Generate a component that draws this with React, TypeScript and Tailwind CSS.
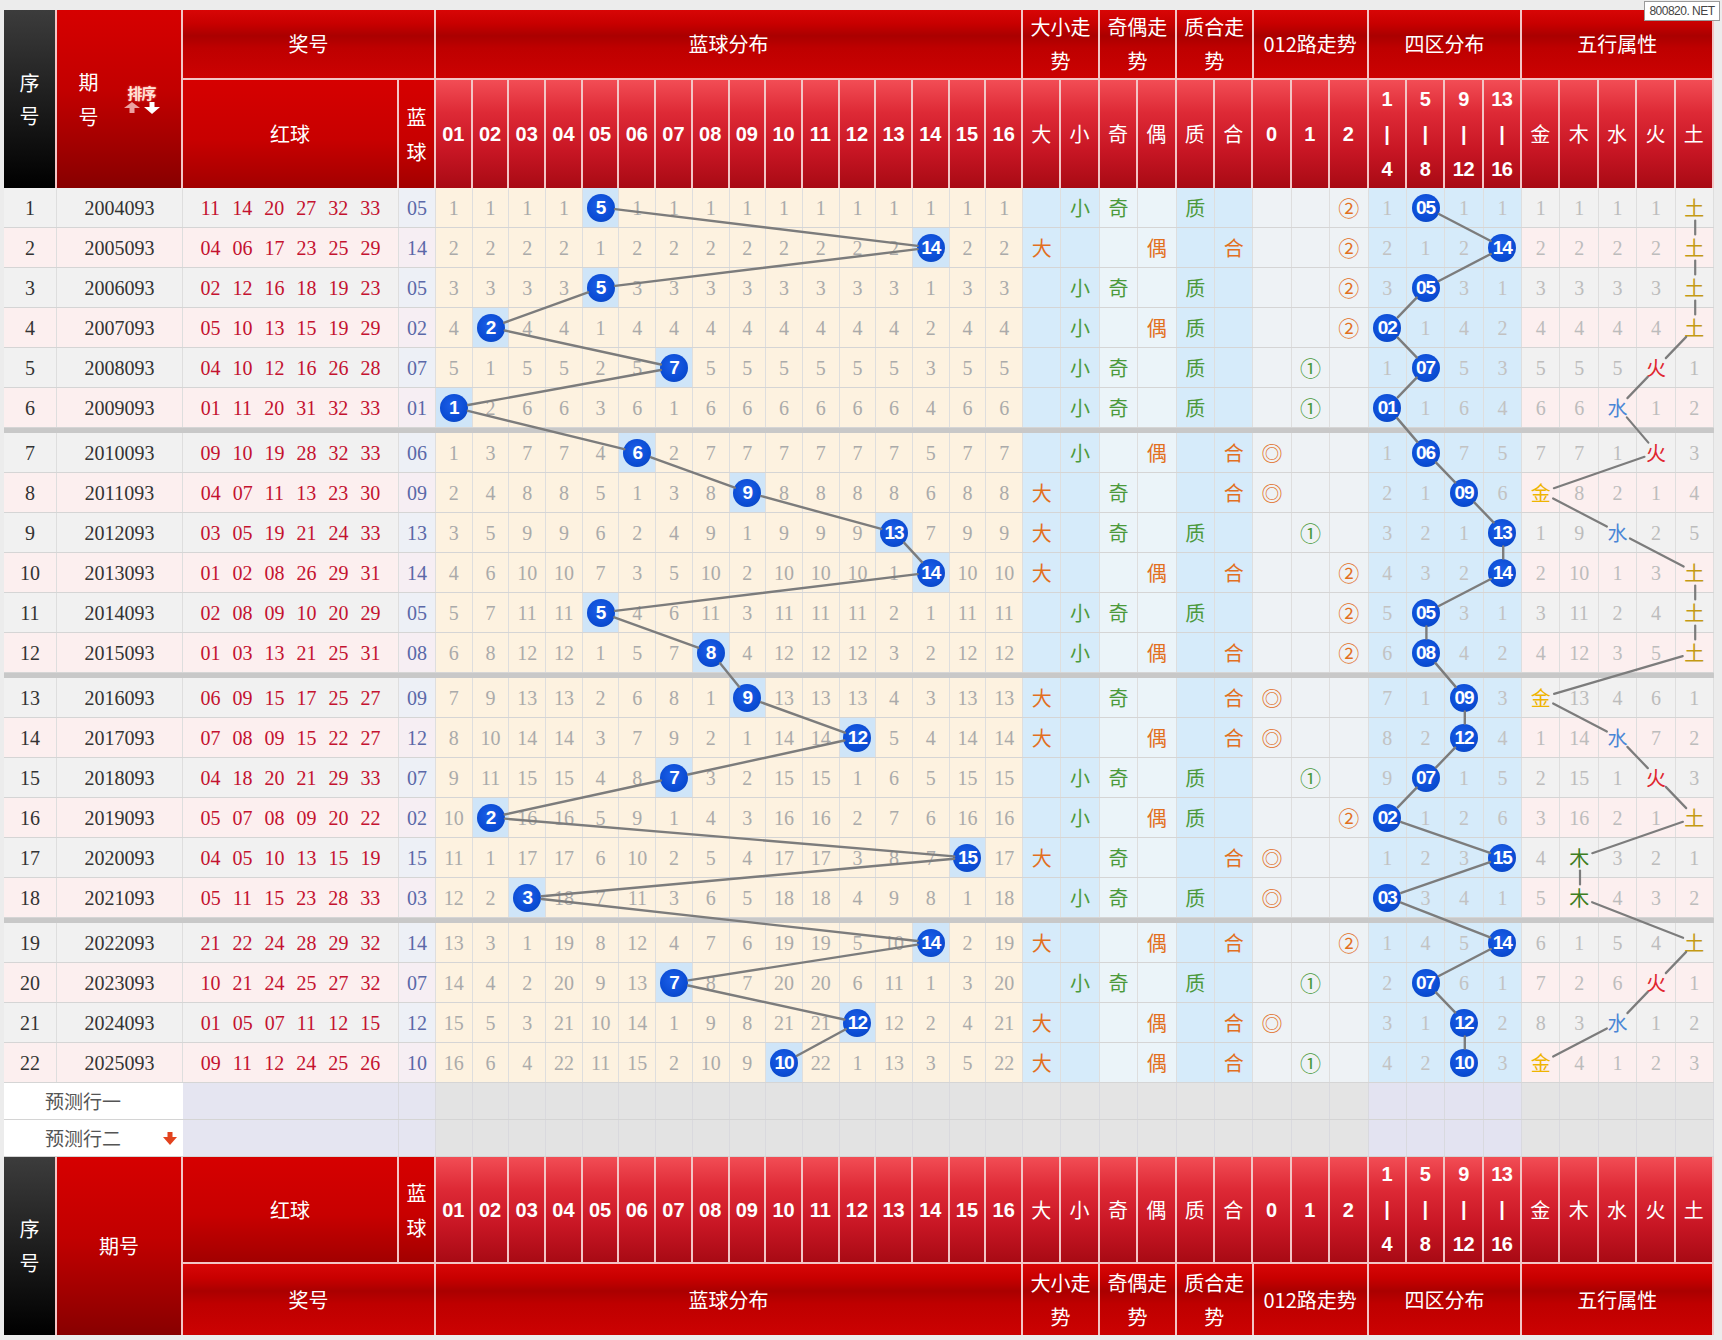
import React from 'react';

const CJK = "font-['Noto_Sans_CJK_SC','Noto_Sans',sans-serif]";
const SERIF = "font-['Liberation_Serif','Noto_Sans_CJK_SC',serif]";
const SANS = "font-['Liberation_Sans','Noto_Sans_CJK_SC',sans-serif]";

const G_TOP = "bg-[linear-gradient(to_bottom,#d80606_0%,#c80000_20%,#aa0000_38%,#be0000_56%,#cc0202_100%)]";
const G_NUM = "bg-[linear-gradient(to_bottom,#f24d55_0%,#de2a36_30%,#c81624_65%,#a80a14_100%)]";
const G_RED = "bg-[linear-gradient(to_bottom,#d60000_0%,#c80000_55%,#a20000_100%)]";
const G_ISSUE = "bg-[linear-gradient(to_bottom,#d60000_0%,#c20000_45%,#880000_100%)]";
const G_BLACK = "bg-[linear-gradient(to_bottom,#3c3c3c_0%,#1e1e1e_50%,#000000_100%)]";
const HB = 'border-r-2 border-[#f3c5c5]';

const BLUE = [5, 14, 5, 2, 7, 1, 6, 9, 13, 14, 5, 8, 9, 12, 7, 2, 15, 3, 14, 7, 12, 10];
const REDS = [
  '11 14 20 27 32 33',
  '04 06 17 23 25 29',
  '02 12 16 18 19 23',
  '05 10 13 15 19 29',
  '04 10 12 16 26 28',
  '01 11 20 31 32 33',
  '09 10 19 28 32 33',
  '04 07 11 13 23 30',
  '03 05 19 21 24 33',
  '01 02 08 26 29 31',
  '02 08 09 10 20 29',
  '01 03 13 21 25 31',
  '06 09 15 17 25 27',
  '07 08 09 15 22 27',
  '04 18 20 21 29 33',
  '05 07 08 09 20 22',
  '04 05 10 13 15 19',
  '05 11 15 23 28 33',
  '21 22 24 28 29 32',
  '10 21 24 25 27 32',
  '01 05 07 11 12 15',
  '09 11 12 24 25 26',
];
const WX = ['土', '土', '土', '土', '火', '水', '火', '金', '水', '土', '土', '土', '金', '水', '火', '土', '木', '木', '土', '火', '水', '金'];
const WX_ORDER = ['金', '木', '水', '火', '土'];
const WX_COLOR: Record<string, string> = {
  金: 'text-[#efb400]',
  木: 'text-[#3d7d22]',
  水: 'text-[#4a86d6]',
  火: 'text-[#e0252e]',
  土: 'text-[#c49a14]',
};
const PRIMES = [1, 2, 3, 5, 7, 11, 13];

function missing(hits: number[], n: number) {
  const cur = new Array(n).fill(0);
  return hits.map((h) => {
    for (let k = 0; k < n; k++) cur[k] = k === h ? 0 : cur[k] + 1;
    return [...cur];
  });
}

const DIST = missing(BLUE.map((b) => b - 1), 16);
const QUAD = missing(BLUE.map((b) => Math.floor((b - 1) / 4)), 4);
const WXM = missing(WX.map((w) => WX_ORDER.indexOf(w)), 5);

const rowTop = (i: number) => i * 40 + Math.floor(i / 6) * 5;

type P = { x: number; y: number };
function segs(pts: P[], r: number) {
  const out: { x1: number; y1: number; x2: number; y2: number }[] = [];
  for (let i = 0; i < pts.length - 1; i++) {
    const a = pts[i];
    const b = pts[i + 1];
    const dx = b.x - a.x;
    const dy = b.y - a.y;
    const L = Math.hypot(dx, dy);
    if (L <= 2 * r) continue;
    const ux = dx / L;
    const uy = dy / L;
    out.push({ x1: a.x + ux * r, y1: a.y + uy * r, x2: b.x - ux * r, y2: b.y - uy * r });
  }
  return out;
}

const distPts = BLUE.map((b, i) => ({ x: 432 + (b - 1) * 36.7 + 18.35, y: rowTop(i) + 19.5 }));
const quadPts = BLUE.map((b, i) => ({ x: 1364.8 + Math.floor((b - 1) / 4) * 38.4 + 19.2, y: rowTop(i) + 19.5 }));
const wxPts = WX.map((w, i) => ({ x: 1518.4 + WX_ORDER.indexOf(w) * 38.4 + 19.2, y: rowTop(i) + 19.5 }));

function Ball({ t }: { t: string }) {
  return (
    <div
      className={`w-[28px] h-[28px] rounded-full bg-[radial-gradient(circle_at_45%_40%,#1c5fe8_0%,#0b4cd4_60%,#0842b6_100%)] text-white font-bold text-[19px] leading-none flex items-center justify-center tracking-[-1px] ${SANS}`}
    >
      {t}
    </div>
  );
}

function GroupRow({ hClass, borderB }: { hClass: string; borderB: boolean }) {
  const b = borderB ? 'border-b-2' : '';
  const cell = `${G_TOP} ${HB} ${b} shrink-0 h-full flex items-center justify-center text-white text-[20px] text-center ${CJK}`;
  return (
    <div className={`flex ${hClass}`}>
      <div className={`${cell} w-[253px]`}>奖号</div>
      <div className={`${cell} w-[587.2px]`}>蓝球分布</div>
      <div className={`${cell} w-[76.8px] leading-[34px]`}>
        大小走
        <br />势
      </div>
      <div className={`${cell} w-[76.8px] leading-[34px]`}>
        奇偶走
        <br />势
      </div>
      <div className={`${cell} w-[76.8px] leading-[34px]`}>
        质合走
        <br />势
      </div>
      <div className={`${cell} w-[115.2px]`}>012路走势</div>
      <div className={`${cell} w-[153.6px]`}>四区分布</div>
      <div className={`${cell} w-[192px]`}>五行属性</div>
    </div>
  );
}

function SubRow({ hClass, borderB }: { hClass: string; borderB: boolean }) {
  const b = borderB ? 'border-b-2' : '';
  const base = `${HB} ${b} shrink-0 h-full flex items-center justify-center text-white text-center`;
  const num = `${base} ${G_NUM} w-[36.7px] text-[20px] font-bold ${SANS}`;
  const sm = `${base} ${G_NUM} w-[38.4px] text-[20px]`;
  return (
    <div className={`flex ${hClass}`}>
      <div className={`${base} ${G_RED} w-[216px] text-[20px] ${CJK}`}>红球</div>
      <div className={`${base} ${G_RED} w-[37px] text-[20px] leading-[35px] ${CJK}`}>
        蓝
        <br />球
      </div>
      {Array.from({ length: 16 }, (_, k) => (
        <div key={k} className={num}>
          {String(k + 1).padStart(2, '0')}
        </div>
      ))}
      {['大', '小', '奇', '偶', '质', '合'].map((t) => (
        <div key={t} className={`${sm} ${CJK}`}>
          {t}
        </div>
      ))}
      {['0', '1', '2'].map((t) => (
        <div key={t} className={`${sm} font-bold ${SANS}`}>
          {t}
        </div>
      ))}
      {[
        ['1', '4'],
        ['5', '8'],
        ['9', '12'],
        ['13', '16'],
      ].map(([a, c]) => (
        <div key={a} className={`${sm} font-bold leading-[35px] tracking-[-0.5px] ${SANS}`}>
          {a}
          <br />|
          <br />
          {c}
        </div>
      ))}
      {WX_ORDER.map((t) => (
        <div key={t} className={`${sm} ${CJK}`}>
          {t}
        </div>
      ))}
    </div>
  );
}

function SortIcon() {
  return (
    <div className="flex flex-col items-center">
      <div className={`text-[15px] font-bold leading-[18px] text-[#ffe2d6] tracking-[-1px] [text-shadow:0_0_2px_#ff8080] ${CJK}`}>
        排序
      </div>
      <svg width="36" height="12" viewBox="0 0 36 12">
        <polygon points="8,0 16,6 0,6" fill="#eba0a0" />
        <rect x="5.5" y="6" width="5" height="5" fill="#eba0a0" />
        <rect x="25.5" y="0" width="5" height="5" fill="#ffffff" />
        <polygon points="20,5 36,5 28,12" fill="#ffffff" />
      </svg>
    </div>
  );
}

function DataRow({ i }: { i: number }) {
  const b = BLUE[i];
  const even = i % 2 === 0;
  const leftBg = even ? 'bg-[#f1f1f1]' : 'bg-[#fcefef]';
  const blueBg = even ? 'bg-[#edf0f6]' : 'bg-[#f6eef3]';
  const cell = 'shrink-0 h-full border-r border-[#dedede] flex items-center justify-center';
  const miss = `text-[20px] text-[#aaaaaa] ${SERIF}`;
  const green = 'text-[#4c9a3c]';
  const orange = 'text-[#e2701f]';
  const big = b >= 9;
  const odd = b % 2 === 1;
  const prime = PRIMES.includes(b);
  const r = b % 3;
  const q = Math.floor((b - 1) / 4);
  const w = WX_ORDER.indexOf(WX[i]);
  const blueA = 'bg-[#d6ebfa]';
  const blueB = 'bg-[#ebf4f9]';
  const grayC = 'bg-[#eef2f5]';
  const ch = `text-[20px] ${CJK}`;
  return (
    <div className="flex h-[40px] border-b border-[#d5d5d5]">
      <div className={`${cell} ${leftBg} w-[53px] text-[20px] text-[#333] ${SERIF}`}>{i + 1}</div>
      <div className={`${cell} ${leftBg} w-[126px] text-[20px] text-[#333] ${SERIF}`}>{2004 + i}093</div>
      <div className={`${cell} ${leftBg} w-[216px] gap-[12px] text-[20px] text-[#c4122f] ${SERIF}`}>
        {REDS[i].split(' ').map((n, k) => (
          <span key={k}>{n}</span>
        ))}
      </div>
      <div className={`${cell} ${blueBg} w-[37px] text-[20px] text-[#5a68a8] ${SERIF}`}>
        {String(b).padStart(2, '0')}
      </div>
      {DIST[i].map((m, k) => (
        <div key={k} className={`${cell} w-[36.7px] ${k === b - 1 ? 'bg-[#cfe5f8]' : 'bg-[#fdf2e0]'}`}>
          {k === b - 1 ? <Ball t={String(b)} /> : <span className={miss}>{m}</span>}
        </div>
      ))}
      <div className={`${cell} ${blueA} w-[38.4px]`}>{big && <span className={`${ch} ${orange}`}>大</span>}</div>
      <div className={`${cell} ${blueA} w-[38.4px]`}>{!big && <span className={`${ch} ${green}`}>小</span>}</div>
      <div className={`${cell} ${blueB} w-[38.4px]`}>{odd && <span className={`${ch} ${green}`}>奇</span>}</div>
      <div className={`${cell} ${blueB} w-[38.4px]`}>{!odd && <span className={`${ch} ${orange}`}>偶</span>}</div>
      <div className={`${cell} ${blueA} w-[38.4px]`}>{prime && <span className={`${ch} ${green}`}>质</span>}</div>
      <div className={`${cell} ${blueA} w-[38.4px]`}>{!prime && <span className={`${ch} ${orange}`}>合</span>}</div>
      <div className={`${cell} ${grayC} w-[38.4px]`}>
        {r === 0 && <span className={`text-[21px] ${CJK} ${orange}`}>◎</span>}
      </div>
      <div className={`${cell} ${grayC} w-[38.4px]`}>
        {r === 1 && <span className={`text-[21px] ${CJK} ${green}`}>①</span>}
      </div>
      <div className={`${cell} ${grayC} w-[38.4px]`}>
        {r === 2 && <span className={`text-[21px] ${CJK} ${orange}`}>②</span>}
      </div>
      {QUAD[i].map((m, k) => (
        <div key={k} className={`${cell} ${blueA} w-[38.4px]`}>
          {k === q ? (
            <Ball t={String(b).padStart(2, '0')} />
          ) : (
            <span className={`text-[20px] text-[#c2c2c2] ${SERIF}`}>{m}</span>
          )}
        </div>
      ))}
      {WXM[i].map((m, k) => (
        <div key={k} className={`${cell} ${leftBg} w-[38.4px]`}>
          {k === w ? (
            <span className={`${ch} ${WX_COLOR[WX[i]]}`}>{WX[i]}</span>
          ) : (
            <span className={`text-[20px] text-[#bcbcbc] ${SERIF}`}>{m}</span>
          )}
        </div>
      ))}
    </div>
  );
}

function PredRow({ label, arrow }: { label: string; arrow?: boolean }) {
  const cell = 'shrink-0 h-full border-r border-[#d9d9de]';
  return (
    <div className="flex h-[37px] border-b border-[#d4d4d4]">
      <div className={`shrink-0 h-full w-[179px] bg-white flex items-center pl-[41px] pr-[6px] text-[19px] text-[#555] ${CJK}`}>
        <span>{label}</span>
        {arrow && (
          <svg className="ml-auto" width="14" height="13" viewBox="0 0 14 13">
            <rect x="4.5" y="0" width="5" height="6" fill="#e2421e" />
            <polygon points="0,5 14,5 7,13" fill="#e2421e" />
          </svg>
        )}
      </div>
      <div className={`${cell} w-[216px] bg-[#e5e5f1]`} />
      <div className={`${cell} w-[37px] bg-[#e5e5f1]`} />
      {Array.from({ length: 16 }, (_, k) => (
        <div key={k} className={`${cell} w-[36.7px] bg-[#e3e3e3]`} />
      ))}
      {Array.from({ length: 9 }, (_, k) => (
        <div key={k} className={`${cell} w-[38.4px] bg-[#e4e4e4]`} />
      ))}
      {Array.from({ length: 4 }, (_, k) => (
        <div key={k} className={`${cell} w-[38.4px] bg-[#e3e3f1]`} />
      ))}
      {Array.from({ length: 5 }, (_, k) => (
        <div key={k} className={`${cell} w-[38.4px] bg-[#e4e4e4]`} />
      ))}
    </div>
  );
}

export default function App() {
  const dSegs = segs(distPts, 14);
  const qSegs = segs(quadPts, 14);
  const wSegs = segs(wxPts, 13);
  return (
    <div className="relative w-[1722px] min-h-[1340px] bg-[#ececec] pt-[10px] pl-[4px]">
      <div className="w-[1710.4px]">
        {/* header */}
        <div className="flex h-[178px]">
          <div
            className={`${G_BLACK} ${HB} shrink-0 w-[53px] h-full flex items-center justify-center text-white text-[20px] leading-[33px] text-center ${CJK}`}
          >
            序
            <br />号
          </div>
          <div className={`${G_ISSUE} ${HB} shrink-0 w-[126px] h-full flex items-center justify-center gap-[25px]`}>
            <div className={`text-white text-[20px] leading-[35px] text-center ${CJK}`}>
              期
              <br />号
            </div>
            <SortIcon />
          </div>
          <div className="flex flex-col">
            <GroupRow hClass="h-[70px]" borderB />
            <SubRow hClass="h-[108px]" borderB={false} />
          </div>
        </div>

        {/* body */}
        <div className="relative">
          {BLUE.map((_, i) => (
            <React.Fragment key={i}>
              <DataRow i={i} />
              {(i === 5 || i === 11 || i === 17) && <div className="h-[5px] bg-[#c8c8c8]" />}
            </React.Fragment>
          ))}
          <svg className="absolute left-0 top-0 pointer-events-none" width="1711" height="895">
            {dSegs.map((s, k) => (
              <line key={`d${k}`} {...s} stroke="#7c7c7c" strokeWidth="2.4" strokeLinecap="round" />
            ))}
            {qSegs.map((s, k) => (
              <line key={`q${k}`} {...s} stroke="#7c7c7c" strokeWidth="2.4" strokeLinecap="round" />
            ))}
            {wSegs.map((s, k) => (
              <line key={`w${k}`} {...s} stroke="#7c7c7c" strokeWidth="2.2" strokeLinecap="round" />
            ))}
          </svg>
        </div>

        <PredRow label="预测行一" />
        <PredRow label="预测行二" arrow />

        {/* footer */}
        <div className="flex h-[178px]">
          <div
            className={`${G_BLACK} ${HB} shrink-0 w-[53px] h-full flex items-center justify-center text-white text-[20px] leading-[34px] text-center ${CJK}`}
          >
            序
            <br />号
          </div>
          <div className={`${G_ISSUE} ${HB} shrink-0 w-[126px] h-full flex items-center justify-center text-white text-[20px] ${CJK}`}>
            期号
          </div>
          <div className="flex flex-col">
            <SubRow hClass="h-[107px]" borderB />
            <GroupRow hClass="h-[71px]" borderB={false} />
          </div>
        </div>
      </div>

      <div
        className={`absolute left-[1644px] top-[1px] w-[76px] h-[20px] bg-white border border-[#9a9a9a] flex items-center justify-center text-[12px] text-[#444] tracking-[-0.5px] ${SANS}`}
      >
        800820. NET
      </div>
    </div>
  );
}
